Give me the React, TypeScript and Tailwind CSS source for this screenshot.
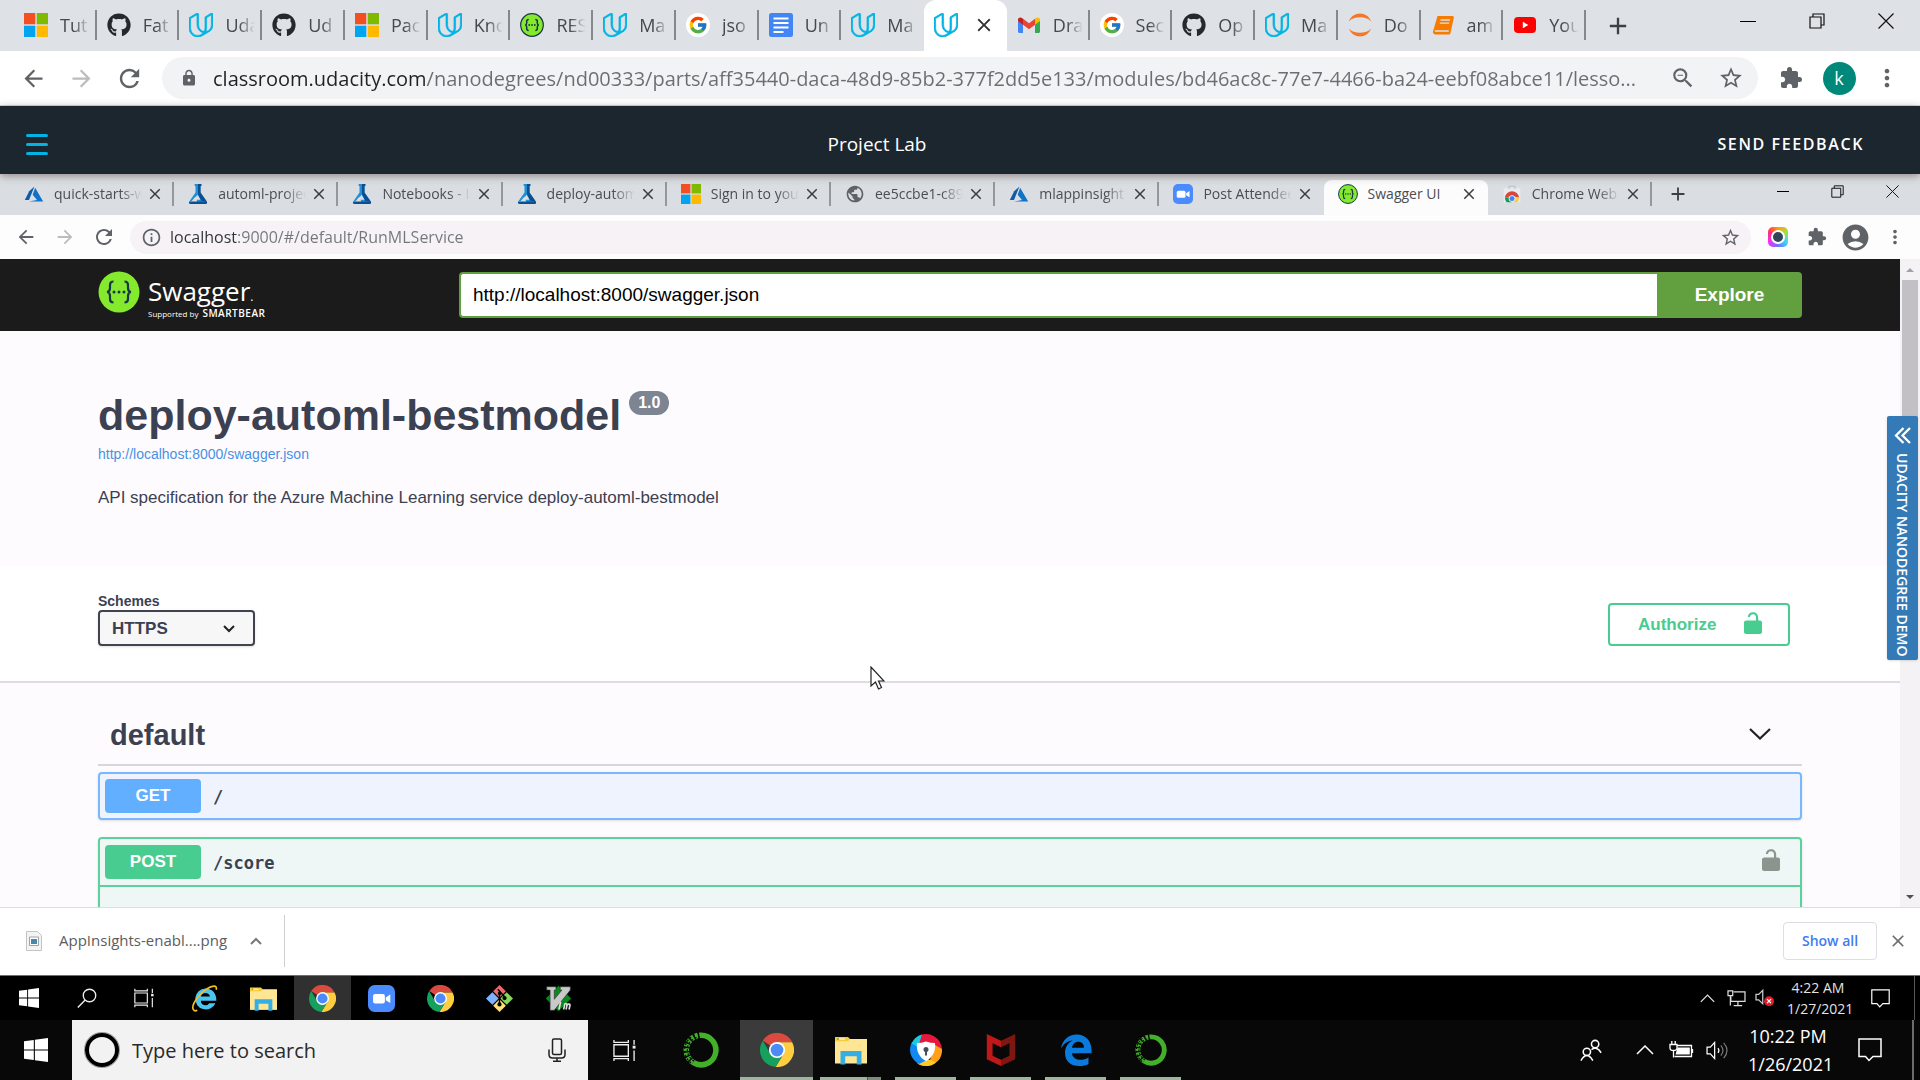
import React from "react";
import {
  MdAccountCircle, MdAdd, MdArrowBack, MdArrowForward, MdClose, MdExtension, MdInfoOutline,
  MdLock, MdMoreVert, MdPublic, MdRefresh, MdStarBorder, MdOutlineZoomOut,
} from "react-icons/md";
import { FaGithub } from "react-icons/fa";
import { FcGoogle } from "react-icons/fc";
import { SiUdacity } from "react-icons/si";

type P = { className?: string };

const Microsoft = ({ className = "" }: P) => (
  <svg viewBox="0 0 24 24" className={className}>
    <path fill="#f25022" d="M0 0h11.3v11.3H0z" /><path fill="#7fba00" d="M12.7 0H24v11.3H12.7z" />
    <path fill="#00a4ef" d="M0 12.7h11.3V24H0z" /><path fill="#ffb900" d="M12.7 12.7H24V24H12.7z" />
  </svg>
);
const Github = ({ className = "" }: P) => <FaGithub className={`${className} text-[#24292e]`} />;
const Udacity = ({ className = "" }: P) => <SiUdacity stroke="currentColor" strokeWidth="0.7" className={`${className} text-[#02b3e4]`} />;
const Google = ({ className = "" }: P) => (
  <span className={`${className} grid place-items-center rounded-full bg-white`}><FcGoogle className="h-5/6 w-5/6" /></span>
);
const Swagger = ({ className = "" }: P) => (
  <svg viewBox="0 0 24 24" className={className}>
    <circle cx="12" cy="12" r="11.3" fill="#85ea2d" stroke="#173647" strokeWidth="1.2" />
    <g fill="none" stroke="#173647" strokeWidth="1.5"><path d="M8.7 6.5c-1.8 0-2 .8-2 2v1.4c0 1.300-.4 2-1.500 2.100 1.100.1 1.500.8 1.500 2.100v1.400c0 1.200.2 2 2 2M15.300 6.500c1.800 0 2 .8 2 2v1.400c0 1.300.4 2 1.500 2.100-1.100.1-1.500.8-1.500 2.100v1.400c0 1.200-.2 2-2 2" /></g>
    <g fill="#173647"><circle cx="9.200" cy="12" r=".9" /><circle cx="12" cy="12" r=".9" /><circle cx="14.800" cy="12" r=".9" /></g>
  </svg>
);
const Docs = ({ className = "" }: P) => (
  <svg viewBox="0 0 24 24" className={className}>
    <rect width="24" height="24" rx="2.500" fill="#4285f4" />
    <path stroke="#fff" strokeWidth="2" d="M4.500 5.500h15M4.500 10h15M4.500 14.500h15M4.500 19h10" />
  </svg>
);
const Gmail = ({ className = "" }: P) => (
  <svg viewBox="0 0 24 24" className={className}>
    <path fill="#4285f4" d="M1 6v12.500C1 19.300 1.700 20 2.500 20H6V10z" /><path fill="#34a853" d="M23 6v12.500c0 .8-.7 1.500-1.500 1.500H18V10z" />
    <path fill="#c5221f" d="M1 6.500V8l5 3.700V5.800l-1-.8C3.300 3.800 1 4.800 1 6.500z" /><path fill="#fbbc04" d="M23 6.500V8l-5 3.700V5.800l1-.8c1.700-1.200 4-.2 4 1.500z" />
    <path fill="#ea4335" d="M6 5.800v5.900l6 4.500 6-4.500V5.800l-6 4.500z" />
  </svg>
);
const Jupyter = ({ className = "" }: P) => (
  <svg viewBox="0 0 24 24" className={className} fill="#f37726">
    <path d="M.8 8.500C3 3.300 7.200.6 12 .6s9 2.700 11.200 7.900C20.500 5.400 16.500 4.200 12 4.200S3.500 5.400.8 8.500zM.8 15.500C3 20.700 7.200 23.400 12 23.400s9-2.700 11.200-7.900c-2.700 3.100-6.700 4.300-11.200 4.300S3.500 18.600.8 15.500z" />
  </svg>
);
const Book = ({ className = "" }: P) => (
  <svg viewBox="0 0 24 24" className={className}>
    <path fill="#f57c00" d="M6.500 3h15c1 0 1.500.8 1.300 1.700L19.500 20c-.2 1-1 1.500-1.800 1.500H4.500C2.800 21.500 1.700 20 2 18.500z" />
    <path d="M9.500 7h9.500M8.800 10.200h9.400M3.800 18h14" stroke="#dee1e6" strokeWidth="1.300" />
  </svg>
);
const Youtube = ({ className = "" }: P) => (
  <svg viewBox="0 0 24 24" className={className}>
    <rect x="1" y="4" width="22" height="16" rx="4" fill="#f00" /><path d="M9.800 8.700v6.600l5.500-3.300z" fill="#fff" />
  </svg>
);
const Azure = ({ className = "" }: P) => (
  <svg viewBox="0 0 24 24" className={className}>
    <path fill="#0f5ba7" d="M12.500 3 6.200 8.800 1 19.200h5z" /><path fill="#1173c7" d="m13.400 4.600-3 8.300 5.200 6.300L6 21h17z" />
  </svg>
);
const Flask = ({ className = "" }: P) => (
  <svg viewBox="0 0 24 24" className={className}>
    <path fill="#1f8fd6" d="M8 0h8v2.500h-1v7.600L22.500 21c.9 1.400.2 3-1.500 3H12L9 15l-4.500 5.500L1.500 21 9 10.100V2.500H8z" />
    <path fill="#0b4f93" d="M12 0h4v2.500h-1v7.600l7.500 10.900-6.800-1L12 12.300zM1.500 21c-.9 1.400-.2 3 1.500 3h18c1.700 0 2.400-1.600 1.500-3H1.500z" />
    <path fill="#dce0e4" d="m11.500 13 3.500 6H7z" />
  </svg>
);
const Globe = ({ className = "" }: P) => <MdPublic className={`${className} text-[#5f6368]`} />;
const Zoom = ({ className = "" }: P) => (
  <svg viewBox="0 0 24 24" className={className}>
    <rect width="24" height="24" rx="6" fill="#4a8cff" /><rect x="4.500" y="8" width="10.500" height="8.500" rx="1.800" fill="#fff" /><path fill="#fff" d="m15.800 11 4-2.500v7.500l-4-2.500z" />
  </svg>
);
const WebStore = ({ className = "" }: P) => (
  <svg viewBox="0 0 24 24" className={className}>
    <path fill="#e8eaed" d="M2 5h20v17H2z" /><path d="M8.500 6V2.500h7V6" fill="none" stroke="#c4c7ca" strokeWidth="1.500" />
    <path fill="#db4437" d="M3.500 16A8.600 8.600 0 0 1 20.500 16L12 15z" /><path fill="#0f9d58" d="M3.500 16a9 9 0 0 0 2 6H12l-4-6z" /><path fill="#ffcd40" d="M20.500 16a9 9 0 0 1-2 6H11l4-6z" />
    <circle cx="12" cy="17.500" r="3.600" fill="#4285f4" stroke="#fff" />
  </svg>
);
const Chrome = ({ className = "" }: P) => (
  <svg viewBox="0 0 24 24" className={className}>
    <path fill="#db4a3e" d="M12 12 2 5.370A12 12 0 0 1 22.800 6.600H12z" /><path fill="#ffcd40" d="M12 6.600h10.700A12 12 0 0 1 11 24l5.700-9.300z" />
    <path fill="#16a05d" d="M2 5.400A12 12 0 0 0 11 24l5.700-9.300-9.400 0z" />
    <circle cx="12" cy="12" r="5.700" fill="#fff" /><circle cx="12" cy="12" r="4.500" fill="#4c8bf5" />
  </svg>
);
const Folder = ({ className = "" }: P) => (
  <svg viewBox="0 0 32 32" className={className}>
    <path fill="#ffe694" d="M0 5h32v24.500H0z" /><path fill="#f9cb3c" d="M0 3h13l2 2-2 2.300H0z" /><path d="M2 5h2" stroke="#2a9a9a" /><path d="M4 5h6" stroke="#fff" />
    <path fill="#35aee6" d="M5.500 30.500V17h21v13.500h-4.700v-8.300H10.200v8.300z" />
  </svg>
);
const IE = ({ className = "" }: P) => (
  <svg viewBox="0 0 32 32" className={className}>
    <path fill="#4cc4f2" d="M17 4a12.500 12.500 0 1 0 12 17.500h-7.500a5.300 5.300 0 0 1-9.800-2.900H30C30.600 10.500 25.500 4 17 4zm-5.300 9.700c.6-2.700 2.900-4.200 5.500-4.200s4.900 1.600 5.300 4.200z" />
    <path fill="none" stroke="#f2bd1d" strokeWidth="2" d="M7.500 30C3 32 .5 28 3.500 21.500 8 12 18 3.500 25.500 1.700c4-1 5.300.8 4.300 4" />
  </svg>
);
const Edge = ({ className = "" }: P) => (
  <svg viewBox="0 0 32 32" className={className}>
    <path fill="#0a7bdc" d="M1 14.500C2 6.500 8.500.5 16.800.5 26 .500 31.500 7.500 31.500 16v3.300H12c.3 4.600 4.400 6.500 8.600 6.500 3 0 5.600-.8 7.900-2.300V30c-2.600 1.400-5.800 2-9 2C10.300 32 5 26.800 5 18.900c0-5.500 3-10.300 7.600-12.400C7.400 7 3.300 10 1 14.500zm11-.8h12c0-3.500-2-6-5.600-6-3.500 0-5.900 2.600-6.400 6z" />
  </svg>
);
const Git = ({ className = "" }: P) => (
  <svg viewBox="0 0 32 32" className={className}>
    <path fill="#ee6a6a" d="m16 0 7.500 7.500L16 15 8.500 7.500z" /><path fill="#80b3ff" d="m7.500 8.500 7.500 7.500-7.500 7.500L0 16z" /><path fill="#87d75a" d="m24.500 8.500L32 16l-7.500 7.500L17 16z" /><path fill="#ffe27a" d="m16 17 7.500 7.500L16 32l-7.500-7.500z" />
    <path d="M16 8v15M14 5l8 9" stroke="#000" strokeWidth="1.800" /><g fill="#000"><circle cx="16" cy="10" r="2" /><circle cx="16" cy="23" r="2.500" /><circle cx="22" cy="15.500" r="2.500" /></g>
  </svg>
);
const Vim = ({ className = "" }: P) => (
  <svg viewBox="0 0 32 32" className={className}>
    <path fill="#0a8a1e" d="m16 1 15 15-15 15L1 16z" />
    <path fill="#c9c9c9" stroke="#333" strokeWidth=".8" d="M2 2h11v4h-2v11L20 6h-2V2h12v4L11 30H6V6H2z" />
    <path fill="none" stroke="#ddd" strokeWidth="2" d="m18.500 20-2 9M22 29l1.500-6.500c2-1 3 0 2.500 1.500L25 29m1-5c2-2 4-1.500 3.500.5L28.500 29" />
  </svg>
);
const Anaconda = ({ className = "" }: P) => (
  <svg viewBox="0 0 36 36" className={className} fill="none" stroke="#43b02a">
    <path strokeWidth="5.500" d="M18 3.200a14.800 14.800 0 1 1-8 27.200" />
    <path strokeWidth="5.500" strokeDasharray="3 1.500" d="M10 30.400A14.800 14.800 0 0 1 18 3.200" />
    <path stroke="#080808" strokeWidth="1.200" d="M11 29A12.800 12.800 0 0 1 17 5M8 31A16.200 16.200 0 0 1 12 3" strokeDasharray="2 2" />
  </svg>
);
const SecureBrowser = ({ className = "" }: P) => (
  <svg viewBox="0 0 32 32" className={className}>
    <path fill="#e8173f" d="M8 2.200A16 16 0 0 1 32 16l-9-5L7 9z" /><path fill="#ff9f1a" d="M32 15a16 16 0 0 1-24 14.900L20 26l5-15z" /><path fill="#ffc928" d="M26 28.500a16 16 0 0 1-19 .7l9-5z" />
    <path fill="#1089f0" d="M9 30A16 16 0 0 1 2 8l7 4 8 14z" /><path fill="#19cbe0" d="M1.500 9.500A16 16 0 0 1 12 .5L8 13z" />
    <path fill="#fff" d="M16 7.500c3 1 6 1.500 9 1.500 1 9-3 15-9 18C10 24 6 18 7 9c3 0 6-.5 9-1.500z" /><circle cx="16" cy="15.500" r="2.500" fill="#454c5e" /><path fill="#454c5e" d="M15 16h2v5.500h-2z" />
  </svg>
);
const McAfee = ({ className = "" }: P) => (
  <svg viewBox="0 0 32 36" className={className}>
    <path fill="#c01818" d="m0 0 16 7.500V15l-9.500-4.500v14L16 29v7L0 28.500z" /><path fill="#7e1611" d="M32 0 16 7.500V15l9.500-4.500v14L16 29v7l16-7.500z" />
  </svg>
);
const Windows = ({ className = "" }: P) => (
  <svg viewBox="0 0 24 24" className={className} fill="#fff"><path d="M0 3.300 9.800 2v9.500H0zM10.900 1.800 24 0v11.500H10.900zM0 12.500h9.800V22L0 20.700zM10.900 12.500H24V24l-13.100-1.800z" /></svg>
);
const TaskView = ({ className = "" }: P) => (
  <svg viewBox="0 0 24 24" className={className} fill="none" stroke="#eee" strokeWidth="1.400"><path d="M1 6h15v12H1zM1 1v2.500h15V1M1 23v-2.500h15V23M22 1v5M22 12v11" /><path d="M20.500 8.500h3" strokeWidth="3" /></svg>
);
const Magnifier = ({ className = "" }: P) => (
  <svg viewBox="0 0 24 24" className={className} fill="none" stroke="#eee" strokeWidth="1.600"><circle cx="15" cy="9" r="7.500" /><path d="M9.800 14.300 1 23.500" /></svg>
);
const Mic = ({ className = "" }: P) => (
  <svg viewBox="0 0 18 24" className={className} fill="none" stroke="#222" strokeWidth="1.500"><rect x="4.500" y="1" width="9" height="15.500" rx="1.500" /><path d="M1 11.500v5C1 18.500 2.500 20 4.500 20h9c2 0 3.500-1.500 3.500-3.500v-5M9 20v3M5 23.200h8" /></svg>
);
const Caret = ({ className = "" }: P) => (
  <svg viewBox="0 0 18 10" className={className} fill="none" stroke="currentColor"><path d="m1 9 8-8 8 8" strokeWidth="1.500" /></svg>
);
const Note = ({ className = "" }: P) => (
  <svg viewBox="0 0 24 24" className={className} fill="none" stroke="#fff" strokeWidth="1.500"><path d="M1 1h22v17.500h-8L11 22.500 7.500 18.500H1z" /></svg>
);
const Speaker = ({ className = "" }: P) => (
  <svg viewBox="0 0 24 20" className={className} fill="none" stroke="#fff" strokeWidth="1.300"><path d="M1 6.500h3.500L9 1.500v17l-4.500-5H1z" /><path d="M12.500 7.500q2 2.500 0 5" /><path d="M15.500 4.500q4.500 5.500 0 11M18.500 2q7 8 0 16" stroke="#777" /></svg>
);
const Muted = ({ className = "" }: P) => (
  <svg viewBox="0 0 22 20" className={className}><path fill="none" stroke="#ccc" strokeWidth="1.400" d="M1 6h3l4.500-4.500v15L4 12H1z" /><circle cx="15.500" cy="13.500" r="5.500" fill="#e01e2b" /><path d="m13.300 11.300 4.400 4.400m0-4.400-4.400 4.400" stroke="#fff" strokeWidth="1.400" /></svg>
);
const Network = ({ className = "" }: P) => (
  <svg viewBox="0 0 20 18" className={className} fill="none" stroke="#ddd" strokeWidth="1.300"><path d="M7 2h12v10H4V7M11.500 12v4M7 16.500h9M1 1h5v5H1zM3.500 6v10.500" /></svg>
);
const Battery = ({ className = "" }: P) => (
  <svg viewBox="0 0 25 20" className={className} fill="none" stroke="#fff" strokeWidth="1.300"><path d="M8 5.500h14.500v11H5.500M23.500 9v4" /><path fill="#fff" stroke="none" d="M8.500 7.500h12.300v7H6.500z" /><path fill="#080808" d="M1 4.500h7v3.500Q8 10.500 4.500 10.500 1 10.500 1 8zM2.800 4.500V1M6.200 4.500V1M4.500 10.500v7" /></svg>
);
const People = ({ className = "" }: P) => (
  <svg viewBox="0 0 24 24" className={className} fill="none" stroke="#fff" strokeWidth="1.700"><circle cx="16.500" cy="5.500" r="4" /><path d="M12.500 11.500q6-4 10.500 3.500" /><circle cx="7.500" cy="14" r="4" /><path d="M1 23.500q6.500-11 13 0" /></svg>
);
const OpenLock = ({ className = "" }: P) => (
  <svg viewBox="0 0 18 22" className={className} fill="currentColor"><path d="M2.500 8.500H12V5.700C12 3.700 11 2.300 9 2.300S6.200 3.500 6 5H3.800C4 2 6 .2 9 .2s5.200 2 5.200 5.300v3H16c1 0 2 .8 2 2V20c0 1-1 2-2 2H2c-1 0-2-1-2-2v-9.500c0-1.200 1-2 2.500-2z" /></svg>
);
const Restore = ({ className = "" }: P) => (
  <svg viewBox="0 0 16 16" className={className} fill="none" stroke="#111" strokeWidth="1.200"><path d="M1 4h11v11H1zM4 4V1h11v11h-3" /></svg>
);
const Cross = ({ className = "" }: P) => (
  <svg viewBox="0 0 16 16" className={className} fill="none" stroke="#111" strokeWidth="1.200"><path d="m.5.5 15 15m0-15-15 15" /></svg>
);
const Camera = ({ className = "" }: P) => (
  <span className={`${className} grid place-items-center rounded-[5px] bg-[conic-gradient(#ff9d00,#a4e043,#3bd7ff,#6b73ff,#f02fff,#ff2f6b,#ff9d00)]`}>
    <span className="h-3.5 w-3.5 rounded-full border-2 border-white bg-[#2f4658]" />
  </span>
);

type Tab = [React.ComponentType<P>, string];
const outerTabs: Tab[] = [
  [Microsoft, "Tut"], [Github, "Fat"], [Udacity, "Uda"], [Github, "Ud"], [Microsoft, "Pac"], [Udacity, "Kno"],
  [Swagger, "RES"], [Udacity, "Ma"], [Google, "jso"], [Docs, "Un"], [Udacity, "Ma"], [Udacity, ""],
  [Gmail, "Dra"], [Google, "Sec"], [Github, "Op"], [Udacity, "Ma"], [Jupyter, "Do"], [Book, "am"], [Youtube, "You"],
];
const innerTabs: Tab[] = [
  [Azure, "quick-starts-w"], [Flask, "automl-projec"], [Flask, "Notebooks - I"], [Flask, "deploy-autom"],
  [Microsoft, "Sign in to you"], [Globe, "ee5ccbe1-c89"], [Azure, "mlappinsight1"], [Zoom, "Post Attendee"],
  [Swagger, "Swagger UI"], [WebStore, "Chrome Web"],
];

function OuterBrowser() {
  return (
    <header>
      <div className="flex h-[51px] bg-[#dee1e6] pl-[14px]">
        <div className="grid min-w-0 flex-1 grid-cols-19">
          {outerTabs.map(([Icon, label], i) => {
            const active = label === "";
            return (
              <div key={i} className={active ? "flex items-center justify-between rounded-t-xl bg-white pr-3 pb-0.5 pl-[10px]" : "flex min-w-0 items-center gap-3 pb-0.5 pl-[10px]"}>
                <Icon className="h-6 w-6 shrink-0" />
                {active ? (
                  <button aria-label="Close tab"><MdClose className="h-[22px] w-[22px] text-[#333]" /></button>
                ) : (
                  <>
                    <span className="min-w-0 flex-1 text-lg whitespace-nowrap text-[#45494d] [mask-image:linear-gradient(to_right,black_40%,transparent_85%)]">{label}</span>
                    {i !== 10 && <span className="-ml-3 h-[30px] w-0.5 bg-[#85888c]" />}
                  </>
                )}
              </div>
            );
          })}
        </div>
        <div className="flex w-[334px] shrink-0 justify-between">
          <button aria-label="New tab" className="grid w-16 place-items-center"><MdAdd className="h-7 w-7 text-[#3c4043]" /></button>
          <div className="flex h-[42px]">
            <button aria-label="Minimize" className="grid w-[69px] place-items-center"><span className="h-px w-4 bg-black" /></button>
            <button aria-label="Restore" className="grid w-[69px] place-items-center"><Restore className="h-4 w-4" /></button>
            <button aria-label="Close" className="grid w-[69px] place-items-center"><Cross className="h-4 w-4" /></button>
          </div>
        </div>
      </div>
      <div className="flex h-[55px] items-center border-b border-[#d5d8dc] bg-white px-[9px] text-[#5f6368]">
        <button aria-label="Back" className="grid w-12 place-items-center"><MdArrowBack className="h-[27px] w-[27px]" /></button>
        <button aria-label="Forward" className="grid w-12 place-items-center text-[#babcbe]"><MdArrowForward className="h-[27px] w-[27px]" /></button>
        <button aria-label="Reload" className="grid w-12 place-items-center"><MdRefresh className="h-[29px] w-[29px]" /></button>
        <div className="mx-[9px] flex h-[42px] flex-1 items-center rounded-full bg-[#f1f3f4] pr-[3px] pl-[18px]">
          <MdLock className="mr-[15px] h-[18px] w-[18px]" />
          <input aria-label="Address" readOnly className="min-w-0 flex-1 bg-[linear-gradient(to_right,#202124_213px,#6a6d71_213px)] bg-clip-text pt-0.5 text-xl text-transparent outline-none" defaultValue="classroom.udacity.com/nanodegrees/nd00333/parts/aff35440-daca-48d9-85b2-377f2dd5e133/modules/bd46ac8c-77e7-4466-ba24-eebf08abce11/lesso..." />
          <button aria-label="Zoom out" className="grid w-12 place-items-center"><MdOutlineZoomOut className="h-[26px] w-[26px]" /></button>
          <button aria-label="Bookmark" className="grid w-12 place-items-center"><MdStarBorder className="h-[26px] w-[26px]" /></button>
        </div>
        <button aria-label="Extensions" className="grid w-12 place-items-center"><MdExtension className="h-6 w-6" /></button>
        <button aria-label="Profile" className="grid w-12 place-items-center"><span className="grid h-[33px] w-[33px] place-items-center rounded-full bg-[#00897b] text-lg leading-none text-white">k</span></button>
        <button aria-label="Menu" className="grid w-12 place-items-center"><MdMoreVert className="h-7 w-7" /></button>
      </div>
    </header>
  );
}

function LabHeader() {
  return (
    <div className="relative z-10 flex h-[68px] items-center bg-[#1c262f] pt-2 text-white shadow-[0_2px_8px_rgba(60,30,30,0.45)]">
      <div className="w-[74px] pl-[26px]">
        <button aria-label="Open navigation" className="flex w-[22px] flex-col gap-[6px]">
          <span className="h-[3px] w-full rounded bg-[#02b3e4]" /><span className="h-[3px] w-full rounded bg-[#02b3e4]" /><span className="h-[3px] w-full rounded bg-[#02b3e4]" />
        </button>
      </div>
      <h1 className="flex-1 text-center text-[19px]">Project Lab</h1>
      <div className="w-[240px] pr-[56px] text-right"><button className="text-base font-semibold tracking-widest whitespace-nowrap">SEND FEEDBACK</button></div>
    </div>
  );
}

function InnerBrowser() {
  return (
    <div>
      <div className="flex h-[41px] bg-[#dadee2] pt-[6px] pl-[10px]">
        <div className="grid min-w-0 flex-1 grid-cols-10">
          {innerTabs.map(([Icon, label], i) => {
            const active = label === "Swagger UI";
            return (
              <div key={i} className={active ? "flex min-w-0 items-center rounded-t-lg bg-[#fcfcfd] pb-2 pl-[14px]" : "flex min-w-0 items-center pb-2 pl-[14px]"}>
                <Icon className="mr-[10px] h-5 w-5 shrink-0" />
                <span className={active ? "min-w-0 flex-1 text-sm whitespace-nowrap text-[#4a4d51]" : "min-w-0 flex-1 text-sm whitespace-nowrap text-[#4a4d51] [mask-image:linear-gradient(to_right,black_75%,transparent)]"}>{label}</span>
                <button aria-label={`Close ${label}`} className="mr-2 ml-1 grid w-[18px] place-items-center"><MdClose className="h-[18px] w-[18px] text-[#3a3d40]" /></button>
                <span className={i === 7 || active ? "w-0.5" : "h-6 w-0.5 bg-[#94979b]"} />
              </div>
            );
          })}
        </div>
        <div className="flex w-[268px] shrink-0 justify-between">
          <button aria-label="New tab" className="grid w-[52px] place-items-center pb-2"><MdAdd className="h-[22px] w-[22px] text-[#3c4043]" /></button>
          <div className="flex h-[22px]">
            <button aria-label="Minimize" className="grid w-[55px] place-items-center"><span className="h-px w-3 bg-black" /></button>
            <button aria-label="Restore" className="grid w-[55px] place-items-center"><Restore className="h-[13px] w-[13px]" /></button>
            <button aria-label="Close" className="grid w-[55px] place-items-center"><Cross className="h-[13px] w-[13px]" /></button>
          </div>
        </div>
      </div>
      <div className="flex h-11 items-center bg-[#fefdfe] pr-[6px] pl-[6px] text-[#5f6368]">
        <button aria-label="Back" className="grid w-[39px] place-items-center"><MdArrowBack className="h-[22px] w-[22px]" /></button>
        <button aria-label="Forward" className="grid w-[39px] place-items-center text-[#babcbe]"><MdArrowForward className="h-[22px] w-[22px]" /></button>
        <button aria-label="Reload" className="grid w-[39px] place-items-center"><MdRefresh className="h-6 w-6" /></button>
        <div className="mx-[7px] flex h-[33px] flex-1 items-center rounded-full bg-[#f6f2f6] pr-[10px] pl-[11px]">
          <MdInfoOutline className="mr-2 h-[21px] w-[21px]" />
          <input aria-label="Page address" readOnly className="min-w-0 flex-1 bg-[linear-gradient(to_right,#303236_68px,#74767a_68px)] bg-clip-text text-base text-transparent outline-none" defaultValue="localhost:9000/#/default/RunMLService" />
          <button aria-label="Bookmark page"><MdStarBorder className="h-[21px] w-[21px]" /></button>
        </div>
        <button aria-label="Screenshot" className="grid w-[39px] place-items-center"><Camera className="h-5 w-5" /></button>
        <button aria-label="Extensions" className="grid w-[39px] place-items-center"><MdExtension className="h-5 w-5" /></button>
        <button aria-label="Account" className="grid w-[39px] place-items-center"><MdAccountCircle className="h-[31px] w-[31px]" /></button>
        <button aria-label="Menu" className="grid w-[39px] place-items-center"><MdMoreVert className="h-[22px] w-[22px]" /></button>
      </div>
    </div>
  );
}

function SwaggerPage() {
  return (
    <main className="relative flex min-h-0 flex-1 overflow-hidden bg-[#fefbff] font-['Liberation_Sans',sans-serif] text-[#3b4151]">
      <div className="min-w-0 flex-1">
        <div className="flex h-[72px] items-center bg-[#1b1b1b] px-[98px]">
          <a href="#" className="flex w-[361px] shrink-0 gap-2 font-['Open_Sans',sans-serif] text-white">
            <svg viewBox="0 0 42 42" className="h-[42px] w-[42px]">
              <circle cx="21" cy="21" r="20.500" fill="#85ea2d" />
              <path d="M15.500 10.500c-3 0-3.500 1.500-3.500 3.500v3c0 2.500-.8 3.800-3 4 2.200.2 3 1.500 3 4v3c0 2 .5 3.500 3.500 3.500M26.500 10.500c3 0 3.500 1.500 3.500 3.500v3c0 2.500.8 3.800 3 4-2.200.2-3 1.500-3 4v3c0 2-.5 3.500-3.500 3.500" fill="none" stroke="#173647" strokeWidth="2.200" />
              <g fill="#173647"><circle cx="16" cy="21" r="1.500" /><circle cx="21" cy="21" r="1.500" /><circle cx="26" cy="21" r="1.500" /></g>
            </svg>
            <span className="flex flex-col pt-1">
              <span className="text-[26px] leading-8">Swagger<span className="text-xs">.</span></span>
              <span className="flex items-baseline gap-1 text-[8px] leading-3 whitespace-nowrap">Supported by <span className="text-[10px] font-semibold tracking-wider">SMARTBEAR</span></span>
            </span>
          </a>
          <form className="flex h-[46px] flex-1" onSubmit={(e) => e.preventDefault()}>
            <input aria-label="Specification URL" defaultValue="http://localhost:8000/swagger.json" className="min-w-0 flex-1 rounded-l border-2 border-r-0 border-[#62a03f] bg-white px-3 text-[19px] text-black outline-none" />
            <button className="w-[145px] rounded-r bg-[#62a03f] text-[19px] font-bold text-white">Explore</button>
          </form>
        </div>

        <section className="h-[235px] px-[98px] pt-[58px]">
          <div className="flex items-start gap-2">
            <h2 className="text-[43px] leading-[52px] font-bold">deploy-automl-bestmodel</h2>
            <span className="mt-[2px] flex h-6 items-center rounded-full bg-[#7d8492] px-[9px] text-base font-bold text-white">1.0</span>
          </div>
          <a href="#" className="mt-[3px] block text-sm leading-5 text-[#4990e2]">http://localhost:8000/swagger.json</a>
          <p className="mt-6 text-[17px] leading-5">API specification for the Azure Machine Learning service deploy-automl-bestmodel</p>
        </section>

        <section className="flex h-[117px] justify-between border-b-2 border-[#dfdce1] bg-white pt-[27px] pr-[110px] pl-[98px]">
          <div>
            <label htmlFor="scheme" className="block text-sm leading-[17px] font-bold">Schemes</label>
            <div className="relative">
              <select id="scheme" className="h-9 w-[157px] appearance-none rounded border-2 border-[#41444e] bg-[#f7f7f7] pt-0.5 pl-3 text-[17px] font-bold shadow-sm"><option>HTTPS</option></select>
              <svg viewBox="0 0 12 8" className="pointer-events-none absolute top-[15px] right-5 h-2 w-3" fill="none" stroke="#222" strokeWidth="2"><path d="m1 1 5 5 5-5" /></svg>
            </div>
          </div>
          <button className="mt-[10px] flex h-[43px] w-[182px] items-center rounded border-2 border-[#49cc90] pl-7 text-[17px] font-bold text-[#49cc90]"><span className="w-[106px] text-left">Authorize</span><OpenLock className="mb-1 h-[22px] w-[18px]" /></button>
        </section>

        <section className="px-[98px]">
          <h3 className="flex h-[83px] items-center justify-between border-b-2 border-[#d8d5db] pt-6 pr-[31px] pl-3 text-[29px] font-bold">
            default
            <button aria-label="Collapse default" className="pb-1"><svg viewBox="0 0 22 12" className="h-3 w-[22px]" fill="none" stroke="#222" strokeWidth="2.200"><path d="m1 1 10 9.500L21 1" /></svg></button>
          </h3>
          <div className="mt-[6px] flex h-12 items-center rounded border-2 border-[#7ab8fd] bg-[#eef3fe] px-[5px] shadow-sm">
            <button className="h-[34px] w-24 rounded bg-[#61affe] text-[17px] font-bold text-white">GET</button>
            <span className="pt-1 pl-3 font-['DejaVu_Sans_Mono',monospace] text-[17px] font-bold">/</span>
          </div>
          <div className="mt-[17px] h-24 rounded border-2 border-[#5dd19c] bg-[#eef7f6] shadow-sm">
            <div className="flex h-12 items-center border-b-2 border-[#5dd19c] pr-5 pl-[5px]">
              <button className="h-[34px] w-24 rounded bg-[#49cc90] text-[17px] font-bold text-white">POST</button>
              <span className="flex-1 pt-1 pl-3 font-['DejaVu_Sans_Mono',monospace] text-[17px] font-bold">/score</span>
              <button aria-label="Authorization"><OpenLock className="mb-1 h-[22px] w-[18px] text-[#8c948e]" /></button>
            </div>
          </div>
        </section>
      </div>
      <div className="flex w-5 flex-col items-center justify-between bg-[#f5f2f6]">
        <div>
          <div className="grid h-[21px] place-items-center"><svg viewBox="0 0 8 4" className="h-1 w-2"><path d="m0 4 4-4 4 4z" fill="#a3a1a5" /></svg></div>
          <div className="h-72 w-4 bg-[#c2c0c4]" />
        </div>
        <svg viewBox="0 0 8 4" className="mb-2 h-1 w-2"><path d="m0 0 4 4 4-4z" fill="#505053" /></svg>
      </div>
      <button className="absolute top-[157px] right-[2px] flex h-[244px] w-[31px] flex-col items-center gap-[9px] rounded-xs bg-[#337ab7] pt-[11px] font-['Open_Sans',sans-serif] text-white shadow">
        <svg viewBox="0 0 17 17" className="h-[17px] w-[17px] shrink-0" fill="none" stroke="#fff" strokeWidth="2.300"><path d="M9.500 1 2 8.500 9.500 16M16 1 8.500 8.500 16 16" /></svg>
        <span className="mr-0.5 text-sm font-semibold whitespace-nowrap [writing-mode:vertical-rl]">UDACITY NANODEGREE DEMO</span>
      </button>
      <svg viewBox="0 0 15 24" className="absolute top-[407px] left-[870px] h-6 w-[15px]"><path d="M1 1v19l4.500-4L8.500 23l3-1.500-3-6.500H14z" fill="#fff" stroke="#222" strokeWidth="1.200" /></svg>
    </main>
  );
}

function DownloadShelf() {
  return (
    <div className="flex h-[68px] items-center border-t border-[#dfdde3] bg-white pb-0.5">
      <button className="flex h-[52px] w-[285px] items-center border-r border-[#cfcfd2] pl-[26px] text-[#5a5d61]">
        <svg viewBox="0 0 16 20" className="h-5 w-4"><path d="M.5.500h11l4 4v15H.5z" fill="#f3f3f3" stroke="#c3c3c6" /><path d="M3.500 6h9v8.500h-9z" fill="#fff" stroke="#9aa4ad" /><path d="M5 8h6v5H5z" fill="#4b87ad" /></svg>
        <span className="ml-[17px] flex-1 text-left text-[15px] whitespace-nowrap">AppInsights-enabl....png</span>
        <svg viewBox="0 0 12 8" className="mr-[22px] h-2 w-3" fill="none" stroke="#77797c" strokeWidth="2"><path d="m1 7 5-5 5 5" /></svg>
      </button>
      <button className="ml-auto h-[38px] w-[94px] rounded border border-[#dedce4] text-sm font-semibold text-[#3f7cf0]">Show all</button>
      <button aria-label="Close downloads" className="mr-3 ml-[11px] grid w-5 place-items-center"><MdClose className="h-5 w-5 text-[#6c6f72]" /></button>
    </div>
  );
}

const remoteApps: [React.ComponentType<P>, string][] = [
  [IE, "Internet Explorer"], [Folder, "File Explorer"], [Chrome, "Chrome"], [Zoom, "Zoom"], [Chrome, "Chrome window"], [Git, "Git"], [Vim, "Vim"],
];
const localApps: [React.ComponentType<P>, string][] = [
  [Folder, "File Explorer"], [SecureBrowser, "Secure Browser"], [McAfee, "McAfee"], [Edge, "Edge"], [Anaconda, "Anaconda window"],
];

function RemoteTaskbar() {
  return (
    <nav aria-label="Remote taskbar" className="flex h-[45px] items-stretch border-t border-[#6d706d] bg-black text-[#e3e3e3]">
      <button aria-label="Start" className="grid w-[58px] place-items-center"><Windows className="h-5 w-5" /></button>
      <button aria-label="Search" className="grid w-[57px] place-items-center"><Magnifier className="h-5 w-5" /></button>
      <button aria-label="Task view" className="grid w-[57px] place-items-center"><TaskView className="h-5 w-5" /></button>
      <div className="ml-[3px] flex">
        {remoteApps.map(([Icon, name], i) => (
          <button key={name} aria-label={name} className={i === 2 ? "mx-px grid w-[57px] place-items-center bg-[#303030]" : "mx-px grid w-[57px] place-items-center"}><Icon className="h-[27px] w-[27px]" /></button>
        ))}
      </div>
      <div className="ml-auto flex items-center">
        <Caret className="mr-3 h-[9px] w-[15px]" />
        <Network className="mr-[9px] h-[17px] w-[19px]" />
        <Muted className="mr-3 h-[18px] w-5" />
        <div className="w-[62px] text-center text-sm leading-[21px] whitespace-nowrap">4:22 AM<br />1/27/2021</div>
        <Note className="mr-[24px] ml-[22px] h-[19px] w-[19px]" />
        <span className="mr-[5px] h-full w-px bg-[#555]" />
      </div>
    </nav>
  );
}

function LocalTaskbar() {
  return (
    <nav aria-label="Taskbar" className="flex h-[60px] items-stretch bg-[#080808] text-white">
      <button aria-label="Start" className="grid w-[72px] place-items-center"><Windows className="h-6 w-6" /></button>
      <div className="flex w-[516px] items-center bg-[#f2f2f2] pr-[22px] pl-[13px]">
        <span className="h-[34px] w-[34px] rounded-full border-[4px] border-black shadow-[0_0_0_1px_#999]" />
        <input aria-label="Search" placeholder="Type here to search" className="ml-[13px] min-w-0 flex-1 bg-transparent pt-0.5 text-xl text-[#222] outline-none placeholder:text-[#2a2a2a]" />
        <Mic className="h-6 w-[18px]" />
      </div>
      <button aria-label="Task view" className="grid w-[72px] place-items-center"><TaskView className="h-[23px] w-[23px]" /></button>
      <button aria-label="Anaconda" className="ml-1 grid w-[73px] place-items-center"><Anaconda className="h-9 w-9" /></button>
      <button aria-label="Chrome" className="ml-[3px] grid w-[73px] place-items-center border-b-3 border-[#a0b5a0] bg-[#3b3b3b] pt-[3px]"><Chrome className="h-[34px] w-[34px]" /></button>
      {localApps.map(([Icon, name], i) => (
        <button key={name} aria-label={name} className={i === 0 ? "ml-[7px] flex w-[61px] flex-col items-center" : "ml-[14px] flex w-[61px] flex-col items-center"}>
          <span className="grid flex-1 place-items-center pt-[3px]"><Icon className="h-8 w-8" /></span>
          <span className="flex h-[3px] w-full bg-[#a0b5a0]">{i === 0 && <span className="ml-auto w-[14px] border-l border-[#555] bg-[#7d8c7d]" />}</span>
        </button>
      ))}
      <div className="ml-auto flex items-center">
        <People className="mr-[34px] h-[22px] w-[22px]" />
        <Caret className="mr-[15px] h-[10px] w-[18px]" />
        <Battery className="mr-3 h-5 w-[25px]" />
        <Speaker className="mr-[19px] h-[19px] w-[23px]" />
        <div className="w-20 text-center text-lg leading-7 whitespace-nowrap">10:22 PM<br />1/26/2021</div>
        <Note className="mr-[30px] ml-[30px] h-6 w-6" />
        <span className="mr-[6px] h-full w-0.5 bg-[#6d6d6d]" />
      </div>
    </nav>
  );
}

export default function App() {
  return (
    <div className="flex h-screen flex-col overflow-hidden font-['Open_Sans',sans-serif]">
      <OuterBrowser />
      <LabHeader />
      <InnerBrowser />
      <SwaggerPage />
      <DownloadShelf />
      <RemoteTaskbar />
      <LocalTaskbar />
    </div>
  );
}
